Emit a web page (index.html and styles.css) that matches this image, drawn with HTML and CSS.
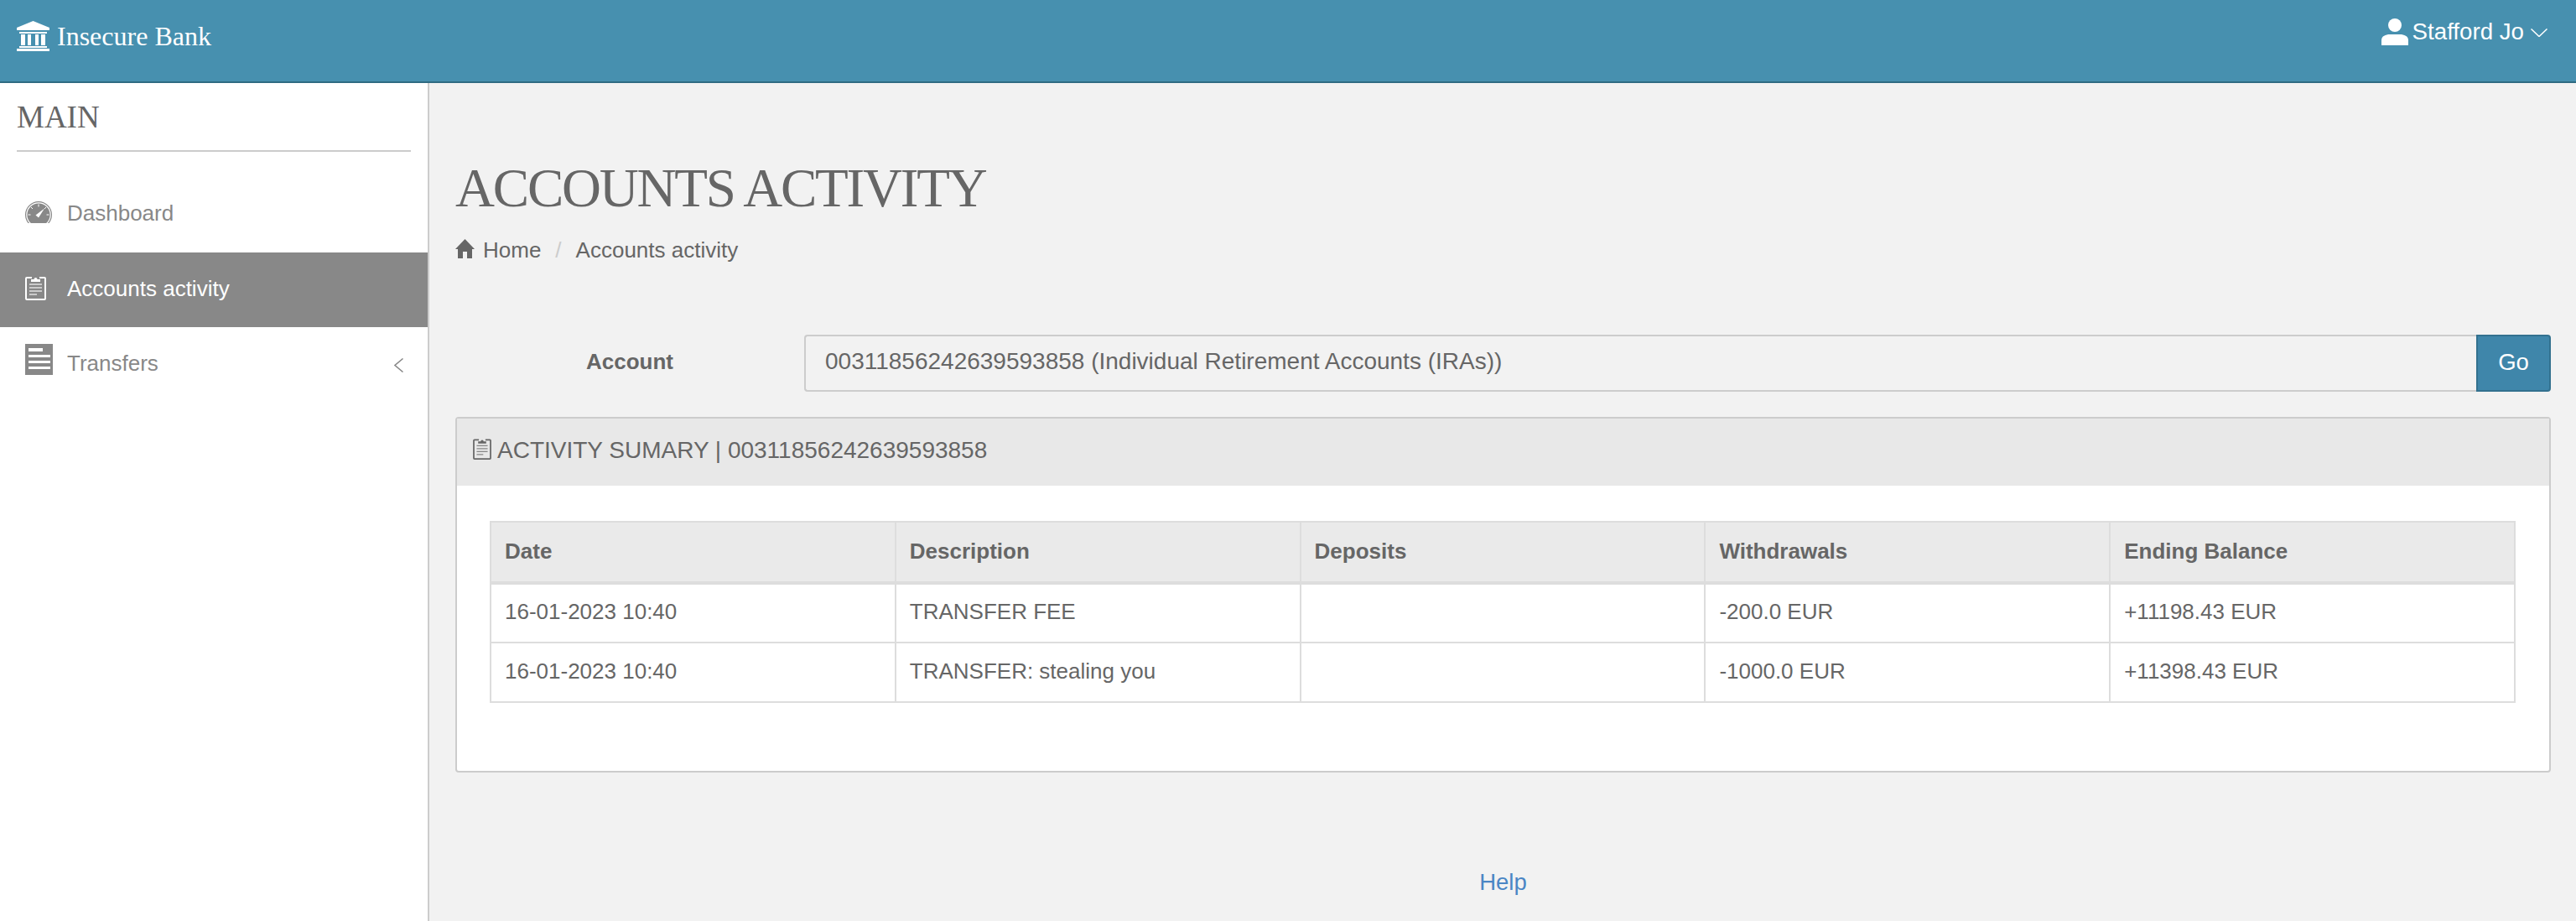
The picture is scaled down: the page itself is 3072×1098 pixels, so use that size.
FILE: index.html
```html
<!DOCTYPE html>
<html lang="en">
<head>
    <meta charset="UTF-8" />
    <title>Insecure Bank</title>
    <link rel="stylesheet" href="styles.css">
</head>
<body>

<svg class="defs" width="0" height="0">
    <symbol id="clipboard" viewBox="0 0 25 31">
        <path d="M8 4H2a1 1 0 0 0-1 1v24a1 1 0 0 0 1 1h21a1 1 0 0 0 1-1V5a1 1 0 0 0-1-1h-6" fill="none" stroke="currentColor" stroke-width="2"/>
        <path d="M7 9V6h3.500a2 2 0 0 1 4 0H18v3z" fill="currentColor"/>
        <path d="M5 12h15M5 16h15M5 20h15M5 24h9" fill="none" stroke="currentColor" stroke-width="1.500" opacity=".75"/>
    </symbol>
</svg>

<header class="topbar">
    <a class="brand">
        <svg class="brand-icon" viewBox="0 0 39 36">
            <path d="M19.500 0 39 8v3H0V8zM3 13h33v2H3zM5 16h5v13H5zM13 16h4v13h-4zM22 16h4v13h-4zM29 16h5v13h-5zM3 30h33v2H3zM0 33h39v3H0z" fill="#fff"/>
        </svg>
        Insecure Bank
    </a>
    <div class="user">
        <svg class="user-icon" viewBox="0 0 32 32">
            <circle cx="16" cy="8" r="8" fill="#fff"/>
            <path d="M0 32v-6c0-5 5-7 10-7h12c5 0 10 2 10 7v6z" fill="#fff"/>
        </svg>
        <span>Stafford Jo</span>
        <svg class="user-caret" viewBox="0 0 20 10">
            <path d="M.5.5 10 9.500 19.500.5" fill="none" stroke="#fff" stroke-width="1.500"/>
        </svg>
    </div>
</header>

<div class="layout">
    <aside class="sidebar">
        <h3 class="side-title">MAIN</h3>
        <ul class="side-nav">
            <li>
                <span class="nav-icon">
                    <svg class="icon-gauge" viewBox="0 0 32 26">
                        <circle cx="16" cy="16" r="15.400" fill="none" stroke="#888" stroke-width="1.200"/>
                        <circle cx="16" cy="16" r="13.600" fill="#888"/>
                        <path d="M16 3.500v3M7 7l2 2M25 7l-2 2M3.500 16h3M25.500 16h3" stroke="#fff" stroke-width="1"/>
                        <path d="M12.500 16.500 23 8.500l-7 11z" fill="#fff"/>
                    </svg>
                </span>
                Dashboard
            </li>
            <li class="active">
                <span class="nav-icon">
                    <svg class="icon-clip" viewBox="0 0 25 31"><use href="#clipboard"/></svg>
                </span>
                Accounts activity
            </li>
            <li>
                <span class="nav-icon">
                    <svg class="icon-list" viewBox="0 0 33 37">
                        <rect width="33" height="37" fill="#888"/>
                        <path d="M4 5h17v4H4zM4 13h26v3H4zM4 20h26v3H4zM4 27h26v3H4z" fill="#fff"/>
                    </svg>
                </span>
                Transfers
                <svg class="nav-caret" viewBox="0 0 11 17">
                    <path d="M10.500.5 1 8.500l9.500 8" fill="none" stroke="#888" stroke-width="1.500"/>
                </svg>
            </li>
        </ul>
    </aside>

    <main class="content">
        <h1 class="page-title">ACCOUNTS ACTIVITY</h1>
        <div class="breadcrumb">
            <svg class="home-icon" viewBox="0 0 23 23">
                <path d="M11.500 0 23 12h-3v11h-6v-8H9v8H3V12H0z" fill="#666"/>
            </svg>
            <span>Home</span>
            <span class="sep">/</span>
            <span>Accounts activity</span>
        </div>

        <form class="account-form">
            <label class="account-label">Account</label>
            <div class="account-select">00311856242639593858 (Individual Retirement Accounts (IRAs))</div>
            <button type="button" class="go-btn">Go</button>
        </form>

        <section class="panel">
            <div class="panel-heading">
                <svg class="icon-clip-small" viewBox="0 0 25 31"><use href="#clipboard"/></svg>
                <span>ACTIVITY SUMARY | 00311856242639593858</span>
            </div>
            <div class="panel-body">
                <table class="activity">
                    <thead>
                    <tr>
                        <th>Date</th>
                        <th>Description</th>
                        <th>Deposits</th>
                        <th>Withdrawals</th>
                        <th>Ending Balance</th>
                    </tr>
                    </thead>
                    <tbody>
                    <tr><td>16-01-2023 10:40</td><td>TRANSFER FEE</td><td></td><td>-200.0 EUR</td><td>+11198.43 EUR</td></tr>
                    <tr><td>16-01-2023 10:40</td><td>TRANSFER: stealing you</td><td></td><td>-1000.0 EUR</td><td>+11398.43 EUR</td></tr>
                    </tbody>
                </table>
            </div>
        </section>

        <footer class="help"><a>Help</a></footer>
    </main>
</div>

</body>
</html>
```

FILE: styles.css
```css
* {
    box-sizing: border-box;
}
html, body {
    margin: 0;
    height: 100%;
    overflow: hidden;
}
body {
    font-family: "Liberation Sans", Arial, sans-serif;
    font-size: 26px;
    color: #666;
    background-color: #f2f2f2;
}
.defs {
    position: absolute;
}
.topbar {
    height: 99px;
    display: flex;
    justify-content: space-between;
    background-color: #4790af;
    border-bottom: 2px solid #2f6b82;
    color: #fff;
}
.brand {
    display: flex;
    align-items: center;
    gap: 9px;
    height: 86px;
    padding-left: 20px;
    font-family: "Liberation Serif", serif;
    font-size: 32px;
}
.brand-icon {
    width: 39px;
    height: 36px;
}
.user {
    display: flex;
    align-items: center;
    height: 76px;
    padding-right: 34px;
    font-size: 27.700px;
}
.user-icon {
    width: 32px;
    height: 32px;
    margin-right: 5px;
}
.user-caret {
    width: 20px;
    height: 10px;
    margin-left: 8px;
    margin-top: 2px;
}
.layout {
    display: flex;
    height: 999px;
}
.sidebar {
    width: 512px;
    background-color: #fff;
    border-right: 2px solid #ccc;
}
.side-title {
    margin: 18px 20px 31px;
    padding-bottom: 16px;
    border-bottom: 2px solid #ccc;
    font-family: "Liberation Serif", serif;
    font-weight: normal;
    font-size: 37px;
    line-height: 46px;
    color: #666;
}
.side-nav {
    list-style: none;
    margin: 0;
    padding: 0;
}
.side-nav li {
    display: flex;
    align-items: center;
    height: 89px;
    padding: 0 29px 3px 30px;
    color: #888;
}
.side-nav li:first-child {
    padding-bottom: 5px;
}
.side-nav li.active {
    background-color: #888;
    color: #fff;
}
.nav-icon {
    display: flex;
    width: 50px;
}
.icon-gauge {
    width: 32px;
    height: 26px;
    margin-top: -3px;
}
.icon-clip {
    width: 25px;
    height: 31px;
    margin-top: -4px;
}
.icon-list {
    width: 33px;
    height: 37px;
    margin-top: -9px;
}
.nav-caret {
    width: 11px;
    height: 17px;
    margin-left: auto;
    margin-top: 4px;
}
.content {
    flex: 1;
    padding: 85px 30px 0 31px;
}
.page-title {
    margin: 0 0 16px;
    font-family: "Liberation Serif", serif;
    font-weight: normal;
    font-size: 65px;
    line-height: 80px;
    letter-spacing: -2.200px;
    color: #666;
}
.breadcrumb {
    display: flex;
    align-items: center;
    height: 36px;
    line-height: 36px;
}
.home-icon {
    width: 23px;
    height: 23px;
    margin-right: 10px;
    margin-top: -3px;
}
.sep {
    margin: 0 17px;
    color: #ccc;
}
.account-form {
    display: flex;
    height: 68px;
    margin: 83px 0 30px;
}
.account-label {
    width: 416px;
    padding-left: 156px;
    font-weight: bold;
    line-height: 64px;
    white-space: nowrap;
}
.account-select {
    flex: 1;
    padding-left: 23px;
    border: 2px solid #ccc;
    border-right: 0;
    border-radius: 4px 0 0 4px;
    background-color: #f2f2f2;
    font-size: 28px;
    line-height: 60px;
}
.go-btn {
    width: 89px;
    padding: 0 0 2px;
    border: 2px solid #33718f;
    border-radius: 0 4px 4px 0;
    background-color: #3f86aa;
    color: #fff;
    font-family: inherit;
    font-size: 27.500px;
}
.panel {
    border: 2px solid #ccc;
    border-radius: 4px;
    background-color: #fff;
}
.panel-heading {
    display: flex;
    align-items: center;
    gap: 7px;
    height: 80px;
    padding: 0 0 4px 19px;
    background-color: #e8e8e8;
    font-size: 28px;
    white-space: pre;
}
.icon-clip-small {
    width: 22px;
    height: 27px;
    margin-top: -6px;
}
.panel-body {
    padding: 42px 40px 81px 39px;
}
.activity {
    width: 100%;
    table-layout: fixed;
    border-collapse: collapse;
}
.activity th, .activity td {
    height: 71px;
    padding: 0 16px 3px;
    border: 2px solid #ddd;
    text-align: left;
}
.activity th {
    height: 73px;
    padding-bottom: 2px;
    background-color: #eaeaea;
    border-bottom-width: 4px;
}
.help {
    margin-top: 113px;
    text-align: center;
    font-size: 27.500px;
    line-height: 36px;
    color: #4a86c5;
}
```
